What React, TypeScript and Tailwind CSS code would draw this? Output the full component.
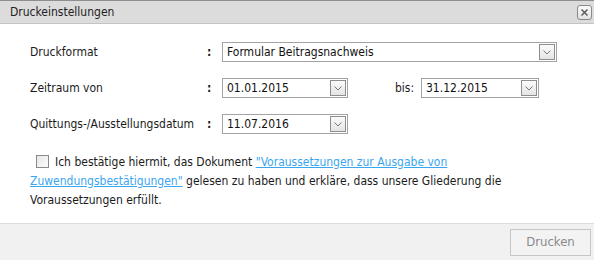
import React from "react";

function Arrow() {
  return (
    <span className="flex h-[16px] w-[16px] items-center justify-center border border-[#8e8e8e] bg-gradient-to-b from-[#fbfbfb] to-[#e4e4e4]">
      <svg width="8" height="5" viewBox="0 0 8 5" fill="none">
        <path d="M0.5 0.5 L4 4 L7.5 0.5" stroke="#7a7a7a" strokeWidth="1" />
      </svg>
    </span>
  );
}

function Select({ value, width }: { value: string; width: string }) {
  return (
    <div
      className={`flex h-[20px] items-center justify-between border border-[#a3a3a3] bg-white pl-[4px] pr-[1px] ${width}`}
    >
      <span className="text-[12px] text-[#111]">{value}</span>
      <Arrow />
    </div>
  );
}

export default function App() {
  return (
    <div
      className="flex h-[260px] w-[594px] flex-col bg-white text-[12px] text-[#1b1b1b]"
      style={{ fontFamily: '"DejaVu Sans Condensed", Tahoma, "Liberation Sans", sans-serif' }}
    >
      {/* Title bar */}
      <div className="flex h-[24px] items-center justify-between border-t border-b border-t-[#8f8f8f] border-b-[#c4c4c4] bg-[#dcdcdc] pl-[10px] pr-[2px]">
        <span className="text-[12px] text-[#222]">Druckeinstellungen</span>
        <button className="flex h-[15px] w-[15px] items-center justify-center rounded-[3px] border border-[#8a8a8a] bg-gradient-to-b from-[#fafafa] to-[#e2e2e2]">
          <svg width="7" height="7" viewBox="0 0 7 7">
            <path d="M0.5 0.5 L6.5 6.5 M6.5 0.5 L0.5 6.5" stroke="#555" strokeWidth="1.4" />
          </svg>
        </button>
      </div>

      {/* Body */}
      <div className="flex-1 pl-[30px] pt-[18px]">
        <div className="flex items-center">
          <span className="w-[177px]">Druckformat</span>
          <span className="w-[15px] font-bold">:</span>
          <Select value="Formular Beitragsnachweis" width="w-[335px]" />
        </div>

        <div className="mt-[16px] flex items-center">
          <span className="w-[177px]">Zeitraum von</span>
          <span className="w-[15px] font-bold">:</span>
          <Select value="01.01.2015" width="w-[126px]" />
          <span className="ml-[47px] w-[26px]">bis:</span>
          <Select value="31.12.2015" width="w-[118px]" />
        </div>

        <div className="mt-[16px] flex items-center">
          <span className="w-[177px]">Quittungs-/Ausstellungsdatum</span>
          <span className="w-[15px] font-bold">:</span>
          <Select value="11.07.2016" width="w-[126px]" />
        </div>

        <p className="mt-[19px] w-[540px] leading-[19px]">
          <span className="ml-[6px] mr-[6px] inline-block h-[13px] w-[13px] translate-y-[2px] border border-[#8a8a8a] bg-gradient-to-br from-[#e6e6e6] to-[#fdfdfd]" />
          Ich bestätige hiermit, das Dokument{" "}
          <a href="#" className="text-[#3aa6f0] underline">
            "Voraussetzungen zur Ausgabe von
            <br />
            Zuwendungsbestätigungen"
          </a>{" "}
          gelesen zu haben und erkläre, dass unsere Gliederung die
          <br />
          Voraussetzungen erfüllt.
        </p>
      </div>

      {/* Footer */}
      <div className="flex h-[37px] items-center justify-end border-t border-[#dcdcdc] bg-[#f1f1f1] pr-[3px]">
        <button className="h-[27px] w-[81px] border border-[#c6c6c6] bg-[#f3f3f3] text-[13px] text-[#8a8a8a]">
          Drucken
        </button>
      </div>
    </div>
  );
}
